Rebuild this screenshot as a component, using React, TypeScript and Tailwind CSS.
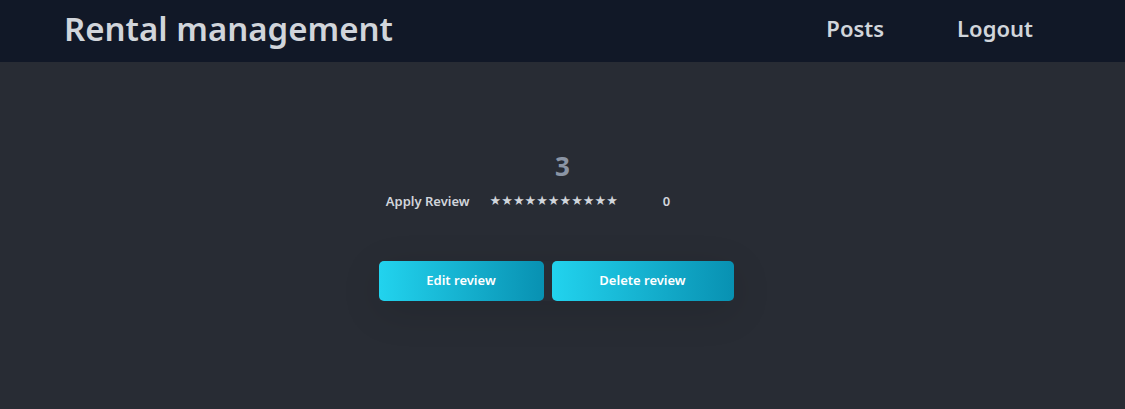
import React from 'react';

const stars = '★★★★★★★★★★★';

export default function App() {
  return (
    <div className="min-h-[409px] bg-[#282c34] font-['Segoe_UI','Noto_Sans',sans-serif]">
      <header className="h-[62px] bg-[#111827] flex items-center justify-between pl-16 pr-[92px] pb-[6px]">
        <h1 className="text-[33px] font-semibold text-[#d1d5db] leading-none">Rental management</h1>
        <nav className="flex items-center gap-[73px] text-[22px] font-semibold text-[#d1d5db]">
          <a href="#">Posts</a>
          <a href="#">Logout</a>
        </nav>
      </header>

      <main className="flex flex-col items-center pt-[88px]">
        <div className="text-[26px] font-bold text-[#8b95a5] leading-8">3</div>

        <div className="mt-[9px] flex items-center pr-[69px] text-[13px] leading-5 font-semibold text-[#d1d5db]">
          <span>Apply Review</span>
          <span className="ml-[20px] font-['DejaVu_Sans',sans-serif] font-normal text-[#d1d5db]">{stars}</span>
          <span className="ml-[45px]">0</span>
        </div>

        <div className="mt-[50px] mr-[13px] flex gap-2 shadow-[0_10px_40px_rgba(0,0,0,0.12)]">
          <button className="h-10 w-[165px] rounded-[5px] bg-gradient-to-r from-[#22d3ee] to-[#0891b2] text-[13px] font-semibold text-white">
            Edit review
          </button>
          <button className="h-10 w-[182px] rounded-[5px] bg-gradient-to-r from-[#22d3ee] to-[#0891b2] text-[13px] font-semibold text-white">
            Delete review
          </button>
        </div>
      </main>
    </div>
  );
}
